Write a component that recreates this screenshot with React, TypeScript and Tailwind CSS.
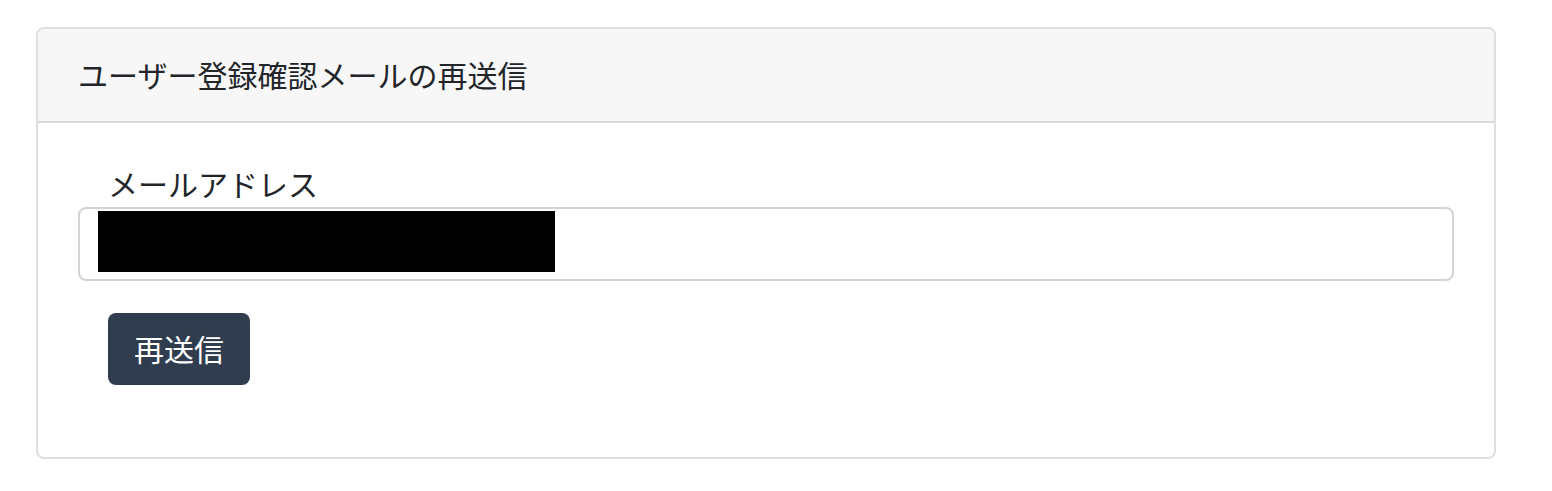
import React from "react";

export default function App() {
  return (
    <main className="pt-[27px] pr-14 pb-8 pl-9 font-['Noto_Sans_CJK_JP',sans-serif] text-[30px] leading-[44px] text-[#212529]">
      <section className="rounded-lg border-2 border-[#dfdfdf] bg-white">
        <header className="rounded-t-md border-b-2 border-[#d8d8d8] bg-[#f7f7f7] px-10 pt-[23px] pb-[25px]">
          <h1>ユーザー登録確認メールの再送信</h1>
        </header>
        <form className="px-10 pt-[38px] pb-[72px]" onSubmit={(e) => e.preventDefault()}>
          <label htmlFor="email" className="block px-[30px] pb-0.5">メールアドレス</label>
          <div className="relative">
            <input
              id="email"
              type="email"
              className="block h-[74px] w-full rounded-lg border-2 border-[#ced4d8] bg-white px-5 outline-none"
            />
            <span aria-hidden="true" className="absolute top-1 left-5 h-[61px] w-[457px] bg-black" />
          </div>
          <button type="submit" className="mt-8 ml-[30px] block h-18 rounded-lg bg-[#303d4e] px-[26px] pb-0.5 text-white">
            再送信
          </button>
        </form>
      </section>
    </main>
  );
}
